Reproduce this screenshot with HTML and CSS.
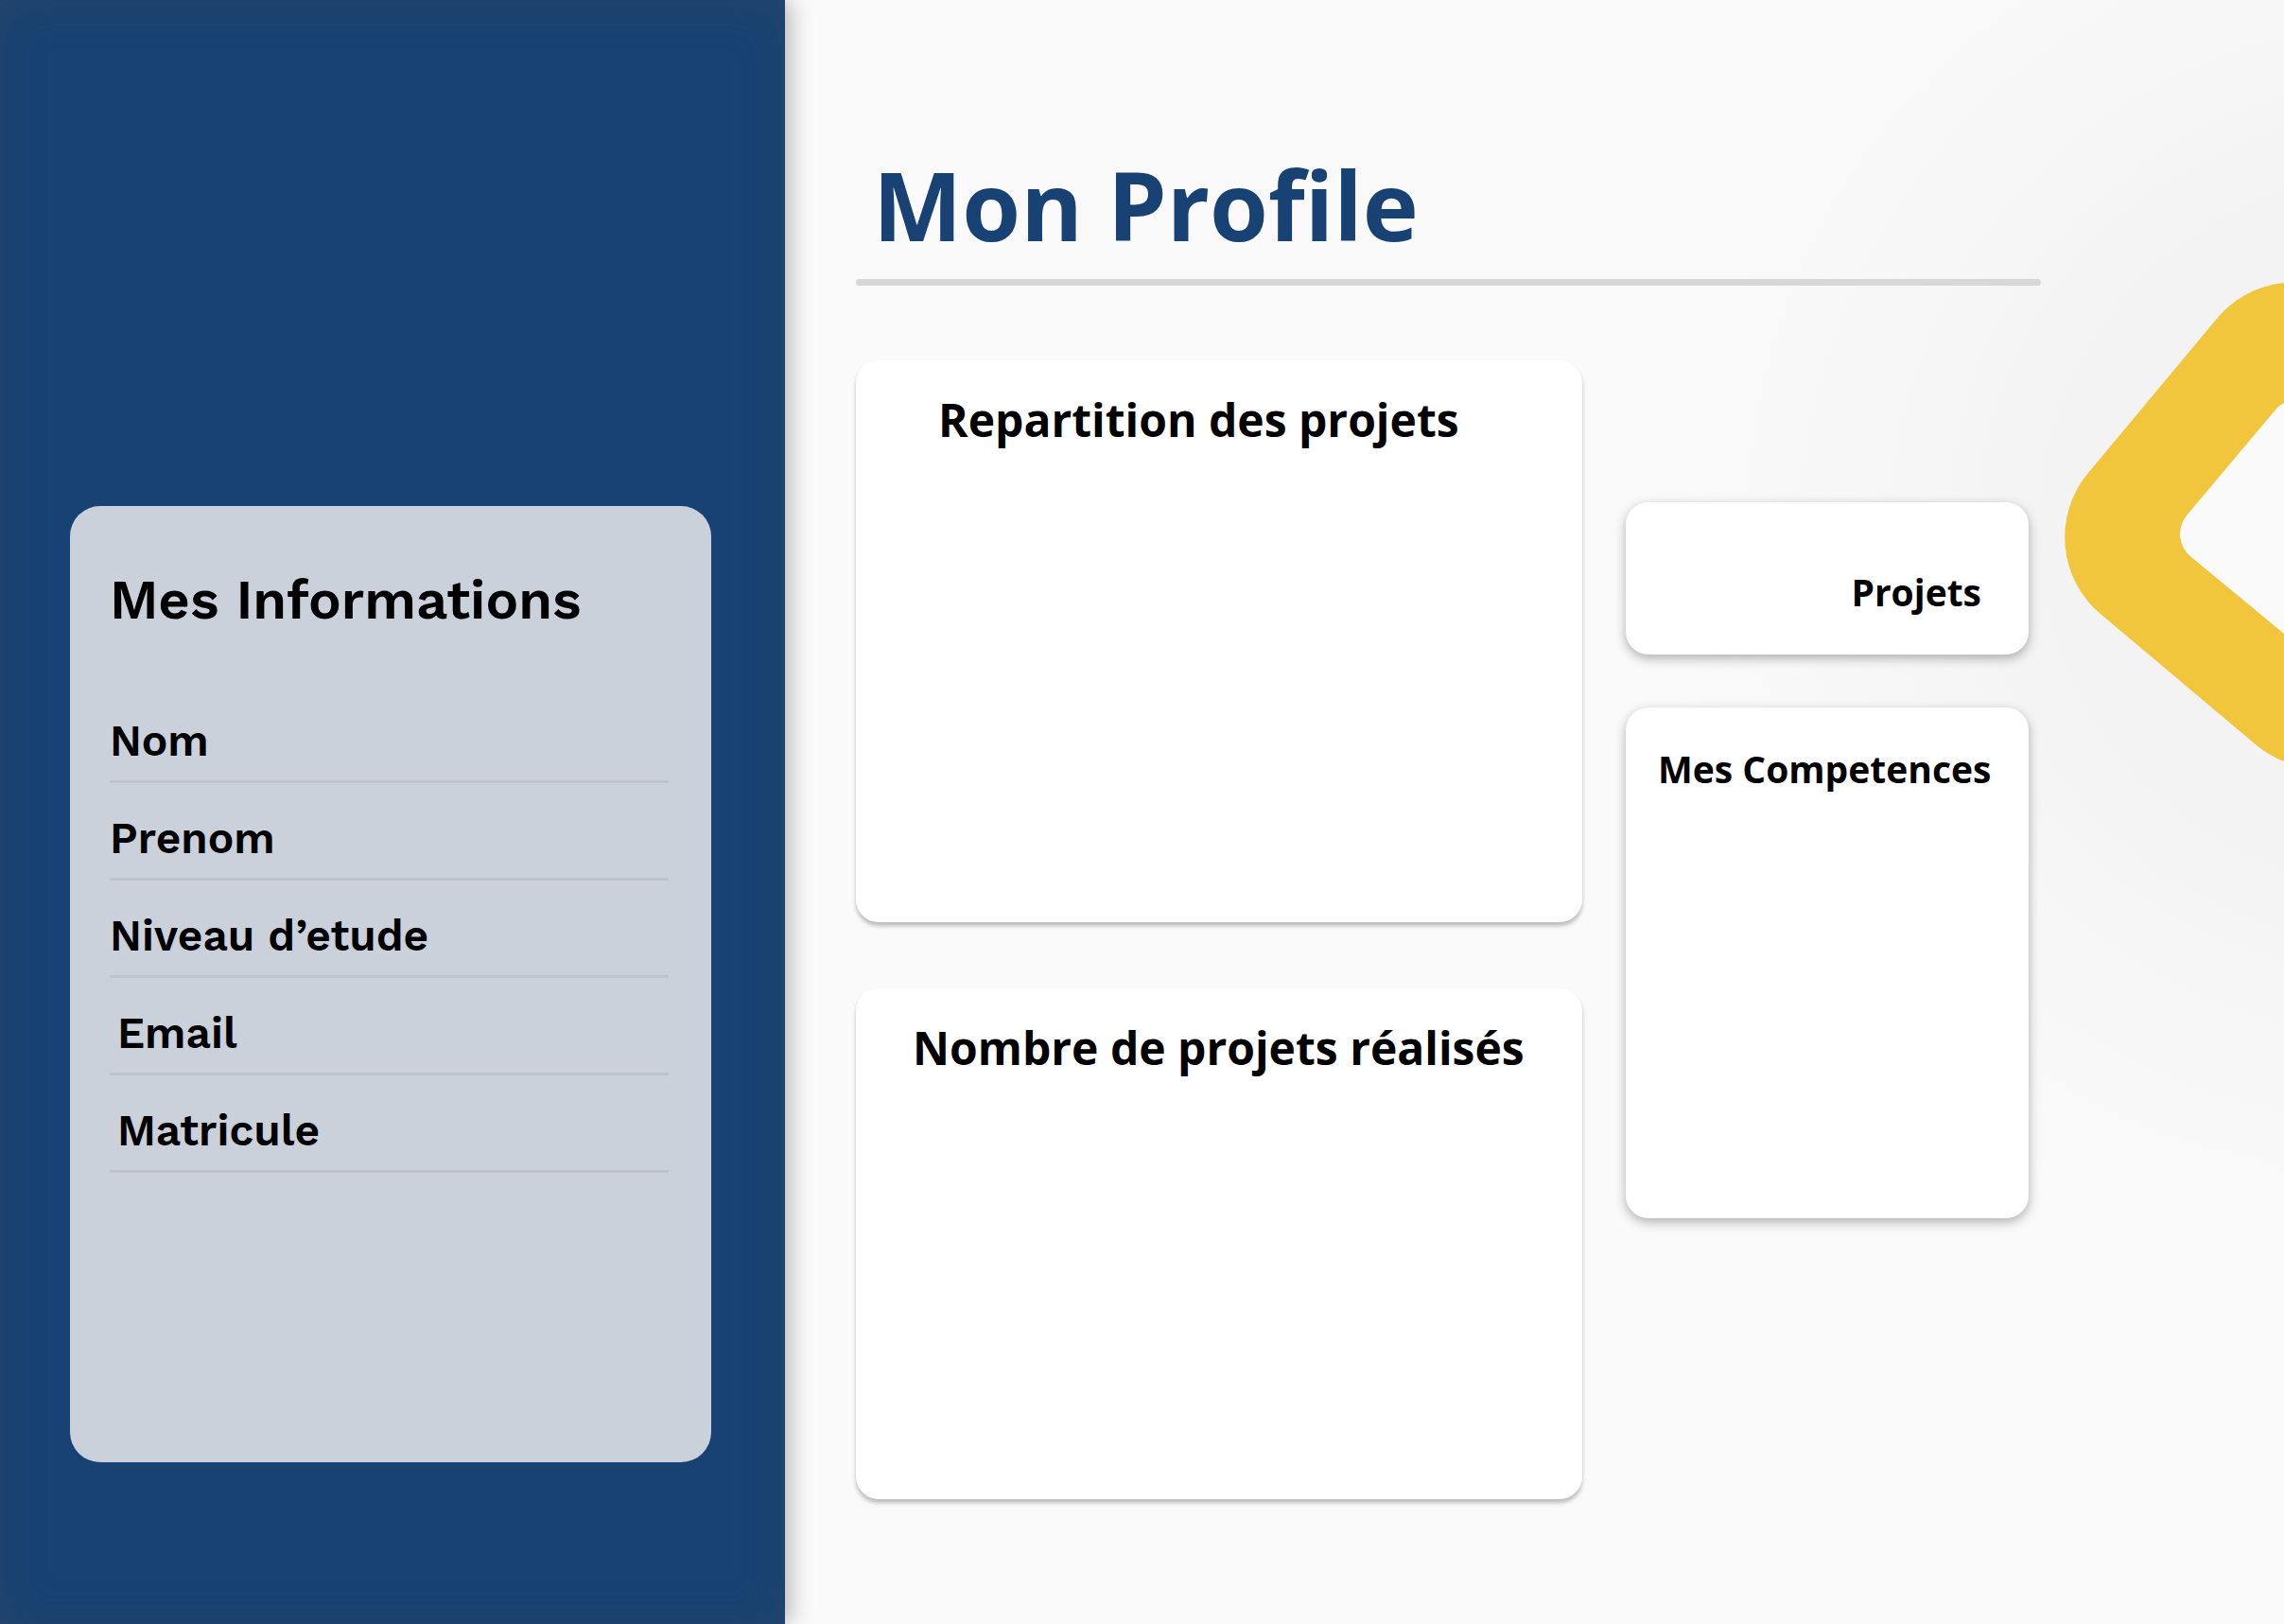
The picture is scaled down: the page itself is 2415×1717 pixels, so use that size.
FILE: index.html
```html
<!DOCTYPE html>
<html lang="fr">
<head>
  <meta charset="utf-8">
  <meta name="viewport" content="width=device-width, initial-scale=1">
  <title>Mon Profile</title>
  <link rel="stylesheet" href="styles.css">
</head>
<body>
  <div class="page">
    <aside class="sidebar">
      <section class="info">
        <h2 class="info-title">Mes Informations</h2>
        <ul class="info-list">
          <li class="info-row">Nom</li>
          <li class="info-row">Prenom</li>
          <li class="info-row">Niveau d’etude</li>
          <li class="info-row info-row-indented">Email</li>
          <li class="info-row info-row-indented">Matricule</li>
        </ul>
      </section>
    </aside>
    <main class="main">
      <svg class="decor" viewBox="0 0 240 520" aria-hidden="true">
        <path fill="#fafafa" d="M240 100 L120 246 L120 290 L240 400Z"/>
        <path fill="#f1c63d" d="M240 0 A106 106 0 0 0 168 39 L33 201 A106 106 0 0 0 47 351 L211 489 A106 106 0 0 0 240 506 V371 L142 290 A31 31 0 0 1 137 246 L232 133 Q236 129 240 127Z"/>
      </svg>
      <h1 class="title">Mon Profile</h1>
      <hr class="rule">
      <div class="board">
        <div class="column">
          <section class="card card-repartition"><h2 class="card-title">Repartition des projets</h2></section>
          <section class="card card-realises"><h2 class="card-title">Nombre de projets réalisés</h2></section>
        </div>
        <div class="column column-side">
          <section class="card card-raised card-projets"><h2 class="card-subtitle">Projets</h2></section>
          <section class="card card-raised card-competences"><h2 class="card-subtitle">Mes Competences</h2></section>
        </div>
      </div>
    </main>
  </div>
</body>
</html>
```
FILE: styles.css
```css
* {
  box-sizing: border-box;
}

body {
  margin: 0;
  background: #fafafa;
  color: #000;
  font-family: "Open Sans", "Noto Sans", sans-serif;
}

h1,
h2,
ul {
  margin: 0;
  padding: 0;
}

.page {
  display: grid;
  grid-template-columns: minmax(0, 830fr) minmax(0, 1585fr);
  min-height: 100vh;
}

.sidebar {
  position: relative;
  z-index: 1;
  padding: 535px 78px 171px 74px;
  background: #174273;
  box-shadow: 4px 0 24px rgba(0, 0, 0, 0.3), inset 0 4px 48px rgba(80, 80, 80, 0.25);
}

.info {
  min-height: 1011px;
  padding: 64px 45px 64px 42px;
  border-radius: 32px;
  background: #cad1db;
  font-family: "Work Sans", Inter, sans-serif;
  font-weight: 600;
}

.info-title {
  font-size: 58px;
  font-weight: 600;
  line-height: 70px;
}

.info-list {
  margin-top: 56px;
  list-style: none;
}

.info-row {
  height: 103px;
  padding-top: 32px;
  border-bottom: 3px solid #c0c4ca;
  font-size: 46px;
  line-height: 52px;
}

.info-row-indented {
  padding-left: 8px;
}

.main {
  position: relative;
  overflow: hidden;
  padding: 148px 257px 132px 75px;
  background: radial-gradient(circle at 1700px 560px, #f3f3f3 360px, #f7f7f7 560px, #fafafa 840px);
}

.decor {
  position: absolute;
  top: 299px;
  right: 0;
  width: 240px;
  height: 520px;
}

.title {
  padding-left: 18px;
  color: #174273;
  font-size: 100px;
  line-height: 136px;
}

.rule {
  height: 7px;
  margin: 11px 0 79px;
  border: 0;
  border-radius: 4px;
  background: #d7d7d7;
}

.board {
  display: grid;
  grid-template-columns: minmax(0, 768fr) minmax(0, 426fr);
  gap: 46px;
  padding-right: 13px;
}

.column {
  display: flex;
  flex-direction: column;
  gap: 70px;
}

.column-side {
  gap: 56px;
  padding-top: 150px;
}

.card {
  border-radius: 24px;
  background: #fff;
  box-shadow: 0 4px 4px rgba(0, 0, 0, 0.25);
}

.card-raised {
  box-shadow: 0 4px 12px rgba(0, 0, 0, 0.3);
}

.card-title {
  font-size: 48px;
  line-height: 70px;
}

.card-subtitle {
  font-size: 39px;
  line-height: 56px;
}

.card-repartition {
  min-height: 594px;
  padding: 28px 87px;
}

.card-realises {
  min-height: 540px;
  padding: 28px 48px 28px 60px;
}

.card-projets {
  min-height: 161px;
  padding: 67px 50px 32px;
  text-align: right;
}

.card-competences {
  min-height: 540px;
  padding: 37px 34px;
}
```
